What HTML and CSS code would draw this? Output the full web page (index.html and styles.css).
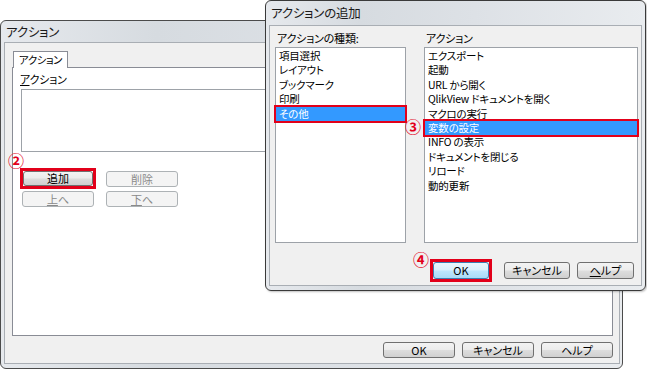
FILE: index.html
```html
<!DOCTYPE html>
<html lang="ja">
<head>
  <meta charset="UTF-8" />
  <title>アクションの追加</title>
  <link rel="stylesheet" href="styles.css">
</head>
<body>
  <div class="desk">

    <div class="win win-back">
      <div class="titlebar">アクション</div>
      <div class="client">
        <div class="tabs"><div class="tab">アクション</div></div>
        <div class="tabpanel">
          <div class="label"><u>ア</u>クション</div>
          <div class="listbox"></div>
          <div class="btn-grid">
            <div class="mark mark-add"><button class="btn">追加</button></div>
            <button class="btn" disabled>削除</button>
            <button class="btn" disabled><u>上</u>へ</button>
            <button class="btn" disabled><u>下</u>へ</button>
          </div>
        </div>
        <div class="footer">
          <button class="btn">OK</button>
          <button class="btn">キャンセル</button>
          <button class="btn">ヘルプ</button>
        </div>
      </div>
      <span class="num num-2">②</span>
    </div>

    <div class="win win-front">
      <div class="titlebar">アクションの追加</div>
      <div class="client">
        <div class="cols">
          <div class="col col-left">
            <div class="label">アクションの種類:</div>
            <ul class="list">
              <li>項目選択</li>
              <li>レイアウト</li>
              <li>ブックマーク</li>
              <li>印刷</li>
              <li class="sel">その他</li>
            </ul>
          </div>
          <div class="col col-right">
            <div class="label">アクション</div>
            <ul class="list">
              <li>エクスポート</li>
              <li>起動</li>
              <li>URL から開く</li>
              <li>QlikView ドキュメントを開く</li>
              <li>マクロの実行</li>
              <li class="sel">変数の設定</li>
              <li>INFO の表示</li>
              <li>ドキュメントを閉じる</li>
              <li>リロード</li>
              <li>動的更新</li>
            </ul>
          </div>
        </div>
        <div class="footer">
          <div class="mark mark-ok"><button class="btn btn-focus">OK</button></div>
          <button class="btn btn-cancel">キャンセル</button>
          <button class="btn btn-help"><u>ヘ</u>ルプ</button>
        </div>
      </div>
      <span class="num num-3">③</span>
      <span class="num num-4">④</span>
    </div>

  </div>
</body>
</html>
```

FILE: styles.css
```css
body {
  margin: 0; background: #fff; color: #000;
  font-family: "Noto Sans CJK JP", "Liberation Sans", sans-serif; font-size: 11px;
  font-feature-settings: "palt"; letter-spacing: -0.2px;
}
u { text-decoration: underline; text-underline-offset: 1px; }

.desk { position: relative; width: 647px; height: 371px; overflow: hidden; }

/* windows */
.win {
  position: absolute; display: flex; flex-direction: column;
  border: 1px solid #4b4b4b; border-radius: 6px;
  background: linear-gradient(90deg, #e6e9ed 0%, #d6dbe0 25%, #dde1e6 55%, #e9ecef 100%);
}
.win-back { left: 0; top: 20px; width: 621px; height: 347px; }
.win-front { left: 265px; top: 0; width: 379px; height: 289px; border-color: #3a3a3a; box-shadow: 1px 1px 2px rgba(0,0,0,0.25); }

.titlebar { font-size: 12.5px; color: #1a1a1a; padding-left: 5px; height: 21px; line-height: 22px; white-space: nowrap; }
.win-front .titlebar { height: 24px; line-height: 24px; }

.client {
  flex: 1; display: flex; flex-direction: column;
  margin: 0 2px 4px 3px; background: #f0f0f0; border: 1px solid #a9aeb4;
}
.win-front .client { margin: 0 3px 4px 3px; }

/* back dialog */
.tabs { display: flex; padding: 7px 0 0 8px; }
.tab {
  height: 16px; padding: 0 5px; line-height: 16px; white-space: nowrap; font-size: 10.5px; letter-spacing: -0.5px;
  background: #fff; border: 1px solid #898c95; border-bottom: none; position: relative; top: 1px;
}
.tabpanel {
  margin-left: 7px; box-sizing: border-box; width: 601px; height: 269px;
  background: #fff; border: 1px solid #898c95; padding: 4px 0 0 7px;
}
.tabpanel .label { height: 14px; line-height: 14px; margin-bottom: 3px; }
.listbox { margin-left: 1px; width: 580px; height: 61px; border: 1px solid #9da2a8; background: #fff; }
.btn-grid { display: grid; grid-template-columns: 72px 72px; column-gap: 12px; row-gap: 4px; margin: 19px 0 0 2px; }

.win-back .footer { display: flex; justify-content: flex-end; gap: 7px; padding: 6px 6px 0 0; }
.win-back .footer .btn { width: 72px; height: 16px; }

/* buttons */
.btn {
  display: block; width: 72px; height: 16px; padding: 0; box-sizing: border-box;
  font: inherit; font-size: 11px; line-height: 13px; color: #000;
  border: 1px solid #707070; border-radius: 3px;
  background: linear-gradient(#f3f3f3 0%, #ececec 48%, #dddddd 52%, #d0d0d0 100%);
}
.btn:disabled { color: #8a8a8a; border-color: #adb2b5; background: #f4f4f4; }
.btn-focus { border-color: #3c7fb1; background: linear-gradient(#eaf6fd 0%, #d9f0fc 48%, #bee6fd 52%, #a9dbf6 100%); }

.mark { outline: 3px solid #e2001a; outline-offset: 0; }
.mark-add { width: 70px; height: 15px; margin: 0 1px; }
.mark-add .btn { width: 70px; height: 15px; }

/* front dialog */
.cols { display: flex; gap: 18px; padding: 5px 3px 0 5px; }
.col-left { width: 131px; }
.col-right { flex: 1; }
.col .label { padding-left: 2px; height: 16px; line-height: 14px; white-space: nowrap; }
.list {
  list-style: none; margin: 0; padding: 1px 0 0 0; height: 196px; box-sizing: border-box;
  background: #fff; border: 1px solid #9da2a8;
}
.list li { height: 14.4px; line-height: 14px; font-size: 10.5px; padding-left: 3px; white-space: nowrap; }
.list li.sel { background: #3399ff; color: #fff; outline: 2px solid #e2001a; position: relative; }

.win-front .footer { display: flex; justify-content: flex-end; align-items: center; padding: 19px 7px 0 0; }
.mark-ok { margin-right: 15px; }
.mark-ok .btn { width: 56px; height: 17px; }
.btn-cancel { width: 66px; height: 17px; margin-right: 7px; }
.btn-help { width: 57px; height: 17px; }

/* circled step numbers */
.num { position: absolute; color: #e2001a; font-size: 16px; line-height: 16px; font-weight: bold; letter-spacing: 0; }
.num-2 { left: 7px; top: 131px; }
.num-3 { left: 139px; top: 117px; }
.num-4 { left: 147px; top: 250px; }
```
